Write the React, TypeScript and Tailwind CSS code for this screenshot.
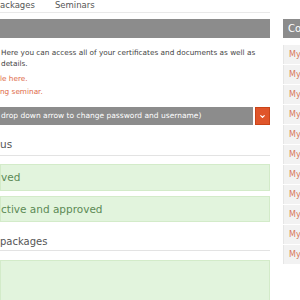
import { ChevronDown } from "lucide-react";

const links = Array.from({ length: 11 }, (_, i) => i);

const Sidebar = () => {
  return <div className="w-[120px] shrink-0 pt-[19px]">
    <div className="h-[19px] bg-[#8c8c8c] text-white text-[10px] leading-[19px] pl-[5px]">Co</div>
    <ul className="mt-[7px] flex flex-col gap-[1px]">
      {links.map((i) => (
        <li key={i} className="h-[19px] bg-[#f2f2f2] border-l border-[#e6e6e6] pl-[5px] text-[8px] leading-[19px] text-[#d9785a]">My</li>
      ))}
    </ul>
  </div>
};

const Main = () => {
  return <div className="w-[270px] shrink-0">
    <div className="h-[13px] border-b border-[#e9e9e9] flex gap-[20px] text-[8.5px] leading-[11px] text-[#555]">
      <span>ackages</span>
      <span>Seminars</span>
    </div>
    <div className="mt-[6px] h-[19px] bg-[#8c8c8c]"></div>
    <div className="pt-[9px] text-[7.3px] text-[#444]">
      <p className="leading-[11px] pl-[1px]">Here you can access all of your certificates and documents as well as<br />details.</p>
      <p className="mt-[3px] leading-[13px] text-[#de6a48]">le here.</p>
      <p className="leading-[13px] text-[#de6a48]">ng seminar.</p>
    </div>
    <div className="mt-[9px] flex gap-[2px] h-[18px]">
      <div className="flex-1 bg-[#8c8c8c] text-white text-[7.5px] leading-[18px] pl-[1px]">drop down arrow to change password and username)</div>
      <div className="w-[15px] bg-[#e0552a] border border-[#c94418] flex items-center justify-center">
        <ChevronDown className="w-[7px] h-[7px] text-white" strokeWidth={4} />
      </div>
    </div>
    <h3 className="mt-[2px] h-[29px] border-b border-[#e3e3e3] text-[10.5px] leading-[34px] text-[#555]">us</h3>
    <div className="mt-[8px] h-[27px] bg-[#e2f4dd] border border-[#d3ebc9] text-[10.5px] leading-[25px] text-[#5c8a55]">ved</div>
    <div className="mt-[5px] h-[26px] bg-[#e2f4dd] border border-[#d3ebc9] text-[10.5px] leading-[24px] text-[#5c8a55]">ctive and approved</div>
    <h3 className="mt-[2px] h-[27px] border-b border-[#e3e3e3] text-[10px] leading-[36px] text-[#555]">packages</h3>
    <div className="mt-[9px] h-[60px] bg-[#e2f4dd] border border-[#d3ebc9]"></div>
  </div>
};

const App = () => {
  return <div className="w-[300px] h-[300px] overflow-hidden bg-white flex gap-[13px] font-['DejaVu_Sans',sans-serif]">
    <Main />
    <Sidebar />
  </div>
};

export default App;
